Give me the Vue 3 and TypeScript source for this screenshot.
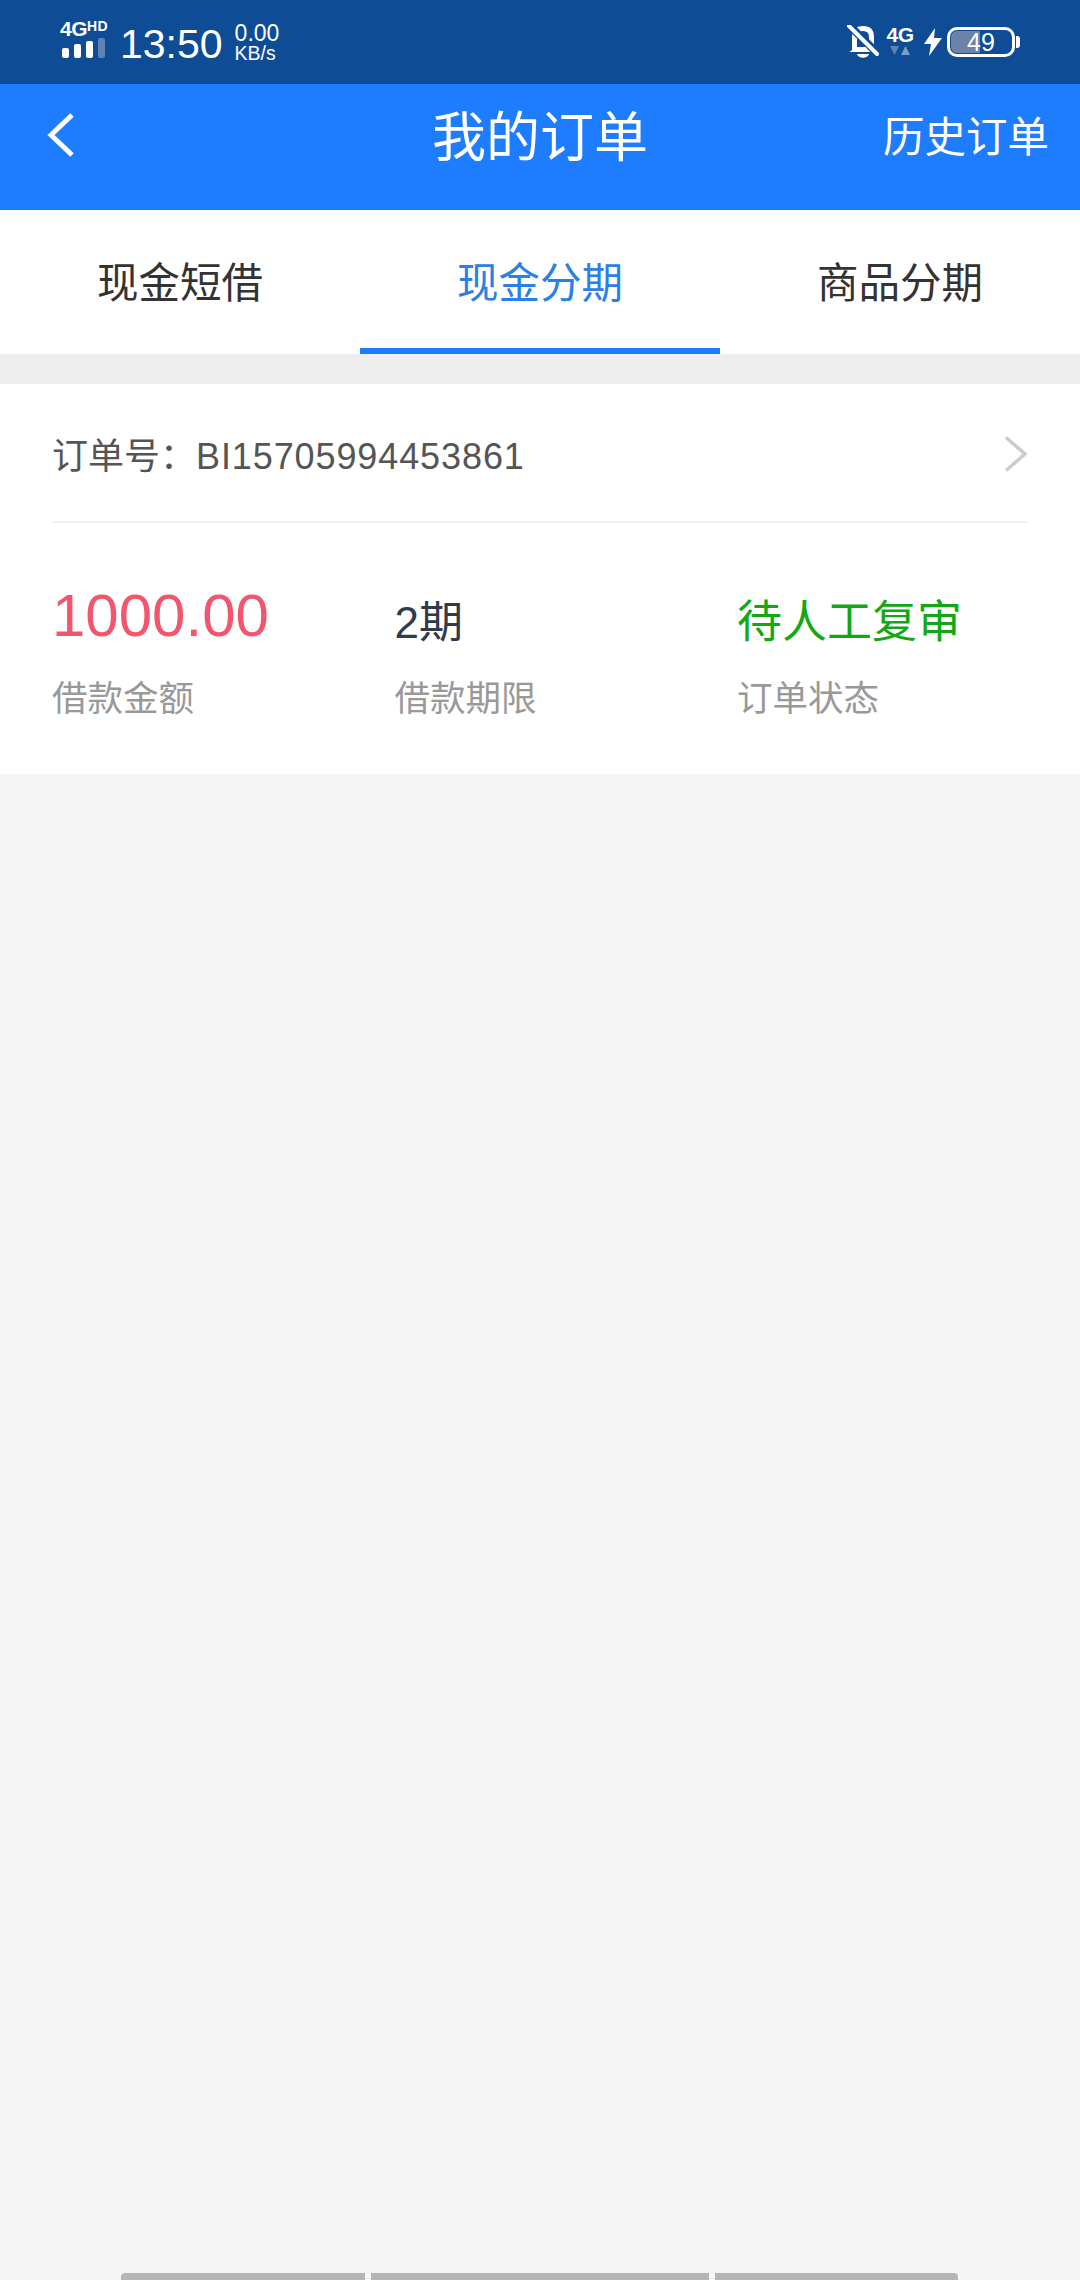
<script setup lang="ts">
const tabs = [
  { label: '现金短借', active: false },
  { label: '现金分期', active: true },
  { label: '商品分期', active: false },
]
const bars = [1, 2, 3]
</script>

<template>
  <div class="page">
    <header class="status">
      <div class="status-left">
        <div class="signal">
          <div class="net"><span class="net-4g">4G</span><span class="net-hd">HD</span></div>
          <div class="signal-bars">
            <i class="b1"></i><i class="b2"></i><i class="b3"></i><i class="b4"></i>
          </div>
        </div>
        <span class="time">13:50</span>
        <div class="speed"><span class="speed-num">0.00</span><span class="speed-unit">KB/s</span></div>
      </div>
      <div class="status-right">
        <svg class="bell" viewBox="0 0 32 34" width="32" height="34">
          <path d="M7.500 24 V12 C7.500 6 11 3.500 16 3.500 C21 3.500 24.500 6 24.500 12 V24" fill="none" stroke="#fff" stroke-width="5" />
          <path d="M2.500 27 C5 25 6 24 6 22 H26 C26 24 27 25 29.500 27 Z" fill="#fff" />
          <path d="M10 29 C11 34 21 34 22 29 Z" fill="#fff" />
          <path d="M2 0 L31 29" stroke="#0f4c96" stroke-width="8" />
          <path d="M2 1 L30 29" stroke="#fff" stroke-width="4" stroke-linecap="round" />
        </svg>
        <div class="mobile">
          <span class="mobile-4g">4G</span>
          <svg viewBox="0 0 24 9" width="24" height="9">
            <path d="M2 0 H11 L6.500 9 Z" fill="#5f82b5" />
            <path d="M17.500 0 L22 9 H13 Z" fill="#7f9cc6" />
          </svg>
        </div>
        <svg class="bolt" viewBox="0 0 18 28" width="18" height="28">
          <path d="M11 0 L0 16 H7 L5 28 L18 10 H10 Z" fill="#fff" />
        </svg>
        <div class="battery">
          <div class="battery-body">
            <div class="battery-fill"></div>
            <span class="battery-num">49</span>
          </div>
          <div class="battery-tip"></div>
        </div>
      </div>
    </header>

    <nav class="nav">
      <svg class="back" viewBox="0 0 30 46" width="30" height="46">
        <path d="M26 3 L5 23 L26 43" fill="none" stroke="#fff" stroke-width="5" />
      </svg>
      <h1 class="title">我的订单</h1>
      <span class="history">历史订单</span>
    </nav>

    <div class="tabs">
      <div v-for="t in tabs" :key="t.label" class="tab" :class="{ active: t.active }">{{ t.label }}</div>
    </div>

    <div class="strip"></div>

    <section class="card">
      <div class="order-row">
        <span class="order-no">订单号：<span class="order-code">BI15705994453861</span></span>
        <svg class="chevron" viewBox="0 0 24 36" width="24" height="36">
          <path d="M2 1.500 L21 18 L2 34.500" fill="none" stroke="#cccccc" stroke-width="3.500" />
        </svg>
      </div>
      <div class="stats">
        <div class="stat">
          <div class="value amount">1000.00</div>
          <div class="label">借款金额</div>
        </div>
        <div class="stat">
          <div class="value term">2期</div>
          <div class="label">借款期限</div>
        </div>
        <div class="stat">
          <div class="value state">待人工复审</div>
          <div class="label">订单状态</div>
        </div>
      </div>
    </section>

    <div class="home-bars">
      <div v-for="b in bars" :key="b" class="home-bar"></div>
    </div>
  </div>
</template>

<style>
html, body { margin: 0; padding: 0; background: #f5f5f5; }
</style>

<style scoped>
.page {
  width: 1080px;
  height: 2280px;
  overflow: hidden;
  display: flex;
  flex-direction: column;
  background: #f5f5f5;
  font-family: "Liberation Sans", "Noto Sans CJK SC", sans-serif;
}
.status {
  height: 84px;
  flex: none;
  background: #0f4c96;
  display: flex;
  justify-content: space-between;
  align-items: flex-start;
  color: #fff;
  box-sizing: border-box;
  padding: 0 60px;
}
.status-left { display: flex; align-items: flex-start; }
.signal { width: 60px; padding-top: 20px; }
.net { display: flex; align-items: flex-start; height: 18px; line-height: 18px; font-weight: 700; white-space: nowrap; }
.net-4g { font-size: 21px; letter-spacing: -0.5px; }
.net-hd { font-size: 14px; line-height: 13px; letter-spacing: 0.3px; }
.signal-bars { display: flex; align-items: flex-end; gap: 5px; margin-top: 0; height: 20px; padding-left: 2px; }
.signal-bars i { display: block; width: 7px; background: #fff; border-radius: 2px; }
.b1 { height: 10px; }
.b2 { height: 14px; }
.b3 { height: 17px; }
.signal-bars .b4 { height: 20px; background: #5f82b5; }
.time { font-size: 41px; line-height: 48px; margin-top: 20px; }
.speed { display: flex; flex-direction: column; margin-left: 12px; padding-top: 22px; }
.speed-num { font-size: 23px; line-height: 23px; }
.speed-unit { font-size: 19.5px; line-height: 17px; }
.status-right { display: flex; align-items: flex-start; margin-top: 25px; }
.bell { display: block; margin-right: 9px; }
.mobile { display: flex; flex-direction: column; align-items: center; width: 24px; margin-right: 12px; }
.mobile-4g { font-size: 21px; line-height: 20px; font-weight: 700; letter-spacing: -0.5px; }
.mobile svg { display: block; margin-top: 1px; }
.bolt { display: block; margin-top: 3px; margin-right: 5px; }
.battery { display: flex; align-items: center; margin-top: 2px; }
.battery-body {
  position: relative;
  width: 68px;
  height: 30px;
  box-sizing: border-box;
  border: 3px solid #fff;
  border-radius: 10px;
  display: flex;
  align-items: center;
  justify-content: center;
  overflow: hidden;
}
.battery-fill { position: absolute; left: 1px; top: 1px; bottom: 1px; width: 29px; background: #6b83a8; border-radius: 6px 0 0 6px; }
.battery-num { position: relative; font-size: 25px; line-height: 24px; }
.battery-tip { width: 4px; height: 12px; background: #fff; border-radius: 0 3px 3px 0; margin-left: 1px; }

.nav {
  height: 126px;
  flex: none;
  background: #1e7cff;
  color: #fff;
  display: flex;
  align-items: center;
  position: relative;
  justify-content: center;
}
.back { position: absolute; left: 46px; top: 28px; }
.title { margin: 0; font-size: 54px; font-weight: 400; line-height: 70px; margin-top: -18px; }
.history { position: absolute; left: 883px; top: 26px; font-size: 41.5px; line-height: 56px; white-space: nowrap; }

.tabs { display: flex; flex: none; height: 144px; background: #fff; }
.tab {
  flex: 1;
  box-sizing: border-box;
  padding-top: 44px;
  text-align: center;
  font-size: 41.5px;
  line-height: 60px;
  color: #333;
}
.tab.active { color: #2a80e6; border-bottom: 6px solid #1e7cff; }

.strip { height: 30px; flex: none; background: #eeeeee; }

.card { background: #fff; height: 390px; flex: none; box-sizing: border-box; padding: 0 52px; }
.order-row {
  height: 139px;
  box-sizing: border-box;
  border-bottom: 2px solid #f1f1f1;
  display: flex;
  justify-content: space-between;
  align-items: flex-start;
}
.order-no { font-size: 36px; line-height: 48px; color: #555; margin-top: 49px; }
.order-code { letter-spacing: 0.9px; }
.chevron { display: block; margin-top: 52px; }
.stats { display: grid; grid-template-columns: repeat(3, 342.5px); }
.stat { display: flex; flex-direction: column; }
.value { line-height: 60px; white-space: nowrap; }
.amount { font-size: 60px; color: #f2566e; line-height: 54px; height: 95px; padding-top: 66px; }
.term { font-size: 44px; color: #333a47; height: 91px; padding-top: 70px; }
.state { font-size: 45px; color: #12a812; height: 91px; padding-top: 70px; }
.label { font-size: 35.5px; line-height: 48px; color: #999; margin-top: -9px; }

.home-bars {
  margin-top: auto;
  height: 7px;
  flex: none;
  display: flex;
  gap: 6px;
  padding-left: 121px;
}
.home-bar { height: 7px; background: #b5b5b5; width: 338px; }
.home-bar:first-child { width: 244px; border-top-left-radius: 4px; }
.home-bar:last-child { width: 243px; border-top-right-radius: 4px; }
</style>
